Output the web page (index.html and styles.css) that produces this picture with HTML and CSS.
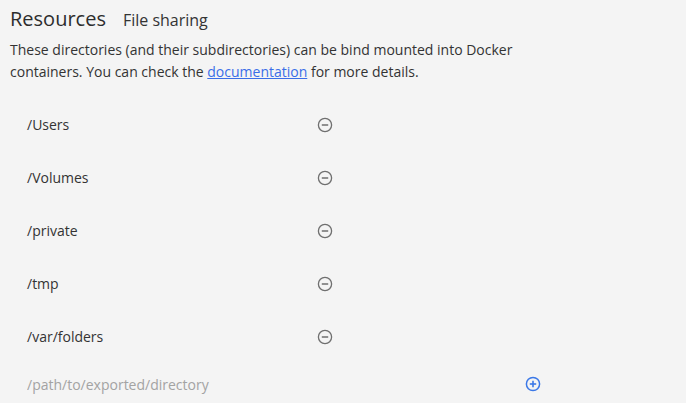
FILE: index.html
```html
<!DOCTYPE html>
<html>
<head>
<meta charset="utf-8">
<link rel="stylesheet" href="styles.css">
</head>
<body>
<div class="page">
  <div class="title">
    <h1>Resources</h1>
    <h2>File sharing</h2>
  </div>
  <p class="desc">These directories (and their subdirectories) can be bind mounted into Docker containers. You can check the <a href="#">documentation</a> for more details.</p>
  <ul class="dirs">
    <li class="row"><span class="path">/Users</span><button class="icon-btn minus" aria-label="Remove"><svg viewBox="0 0 16 16" width="16" height="16"><circle cx="8" cy="8" r="6.6" fill="none" stroke="currentColor" stroke-width="1.3"/><line x1="4.8" y1="8" x2="11.2" y2="8" stroke="currentColor" stroke-width="1.5"/></svg></button></li>
    <li class="row"><span class="path">/Volumes</span><button class="icon-btn minus" aria-label="Remove"><svg viewBox="0 0 16 16" width="16" height="16"><circle cx="8" cy="8" r="6.6" fill="none" stroke="currentColor" stroke-width="1.3"/><line x1="4.8" y1="8" x2="11.2" y2="8" stroke="currentColor" stroke-width="1.5"/></svg></button></li>
    <li class="row"><span class="path">/private</span><button class="icon-btn minus" aria-label="Remove"><svg viewBox="0 0 16 16" width="16" height="16"><circle cx="8" cy="8" r="6.6" fill="none" stroke="currentColor" stroke-width="1.3"/><line x1="4.8" y1="8" x2="11.2" y2="8" stroke="currentColor" stroke-width="1.5"/></svg></button></li>
    <li class="row"><span class="path">/tmp</span><button class="icon-btn minus" aria-label="Remove"><svg viewBox="0 0 16 16" width="16" height="16"><circle cx="8" cy="8" r="6.6" fill="none" stroke="currentColor" stroke-width="1.3"/><line x1="4.8" y1="8" x2="11.2" y2="8" stroke="currentColor" stroke-width="1.5"/></svg></button></li>
    <li class="row"><span class="path">/var/folders</span><button class="icon-btn minus" aria-label="Remove"><svg viewBox="0 0 16 16" width="16" height="16"><circle cx="8" cy="8" r="6.6" fill="none" stroke="currentColor" stroke-width="1.3"/><line x1="4.8" y1="8" x2="11.2" y2="8" stroke="currentColor" stroke-width="1.5"/></svg></button></li>
  </ul>
  <div class="add-row">
    <input class="path-input" type="text" placeholder="/path/to/exported/directory">
    <button class="icon-btn plus" aria-label="Add"><svg viewBox="0 0 16 16" width="16" height="16"><circle cx="8" cy="8" r="6.6" fill="none" stroke="currentColor" stroke-width="1.5"/><line x1="4.8" y1="8" x2="11.2" y2="8" stroke="currentColor" stroke-width="1.6"/><line x1="8" y1="4.8" x2="8" y2="11.2" stroke="currentColor" stroke-width="1.6"/></svg></button>
  </div>
</div>
</body>
</html>
```

FILE: styles.css
```css
* { box-sizing: border-box; }
html, body {
  margin: 0;
  padding: 0;
  background: #f4f4f4;
}
body {
  font-family: "Open Sans", "Noto Sans", sans-serif;
  color: #333;
}
.page {
  padding: 4px 10px 0 10px;
}
.title {
  display: flex;
  align-items: baseline;
  gap: 17px;
  height: 32px;
}
.title h1 {
  margin: 0;
  font-size: 20px;
  font-weight: 400;
  line-height: 30px;
  color: #2d2d2d;
}
.title h2 {
  margin: 0;
  font-size: 16px;
  font-weight: 400;
  line-height: 30px;
  color: #333;
}
.desc {
  margin: 3px 0 0 0;
  font-size: 14px;
  line-height: 22px;
  max-width: 520px;
  color: #333;
}
.desc a {
  color: #3a6ee8;
  text-decoration: underline;
}
.dirs {
  list-style: none;
  margin: 15px 0 0 0;
  padding: 0 0 0 17px;
}
.row {
  display: flex;
  align-items: center;
  height: 53px;
}
.path {
  width: 290px;
  font-size: 14px;
  color: #333;
}
.icon-btn {
  border: 0;
  background: transparent;
  padding: 0;
  width: 16px;
  height: 16px;
  display: flex;
  align-items: center;
  justify-content: center;
  cursor: pointer;
}
.minus { color: #6f6f6f; }
.plus { color: #3b78e7; }
.add-row {
  display: flex;
  align-items: center;
  height: 42px;
  padding-left: 17px;
}
.path-input {
  width: 498px;
  border: 0;
  background: transparent;
  padding: 0;
  font-family: inherit;
  font-size: 14px;
  color: #333;
  outline: none;
}
.path-input::placeholder {
  color: #a3a3a3;
}
```
